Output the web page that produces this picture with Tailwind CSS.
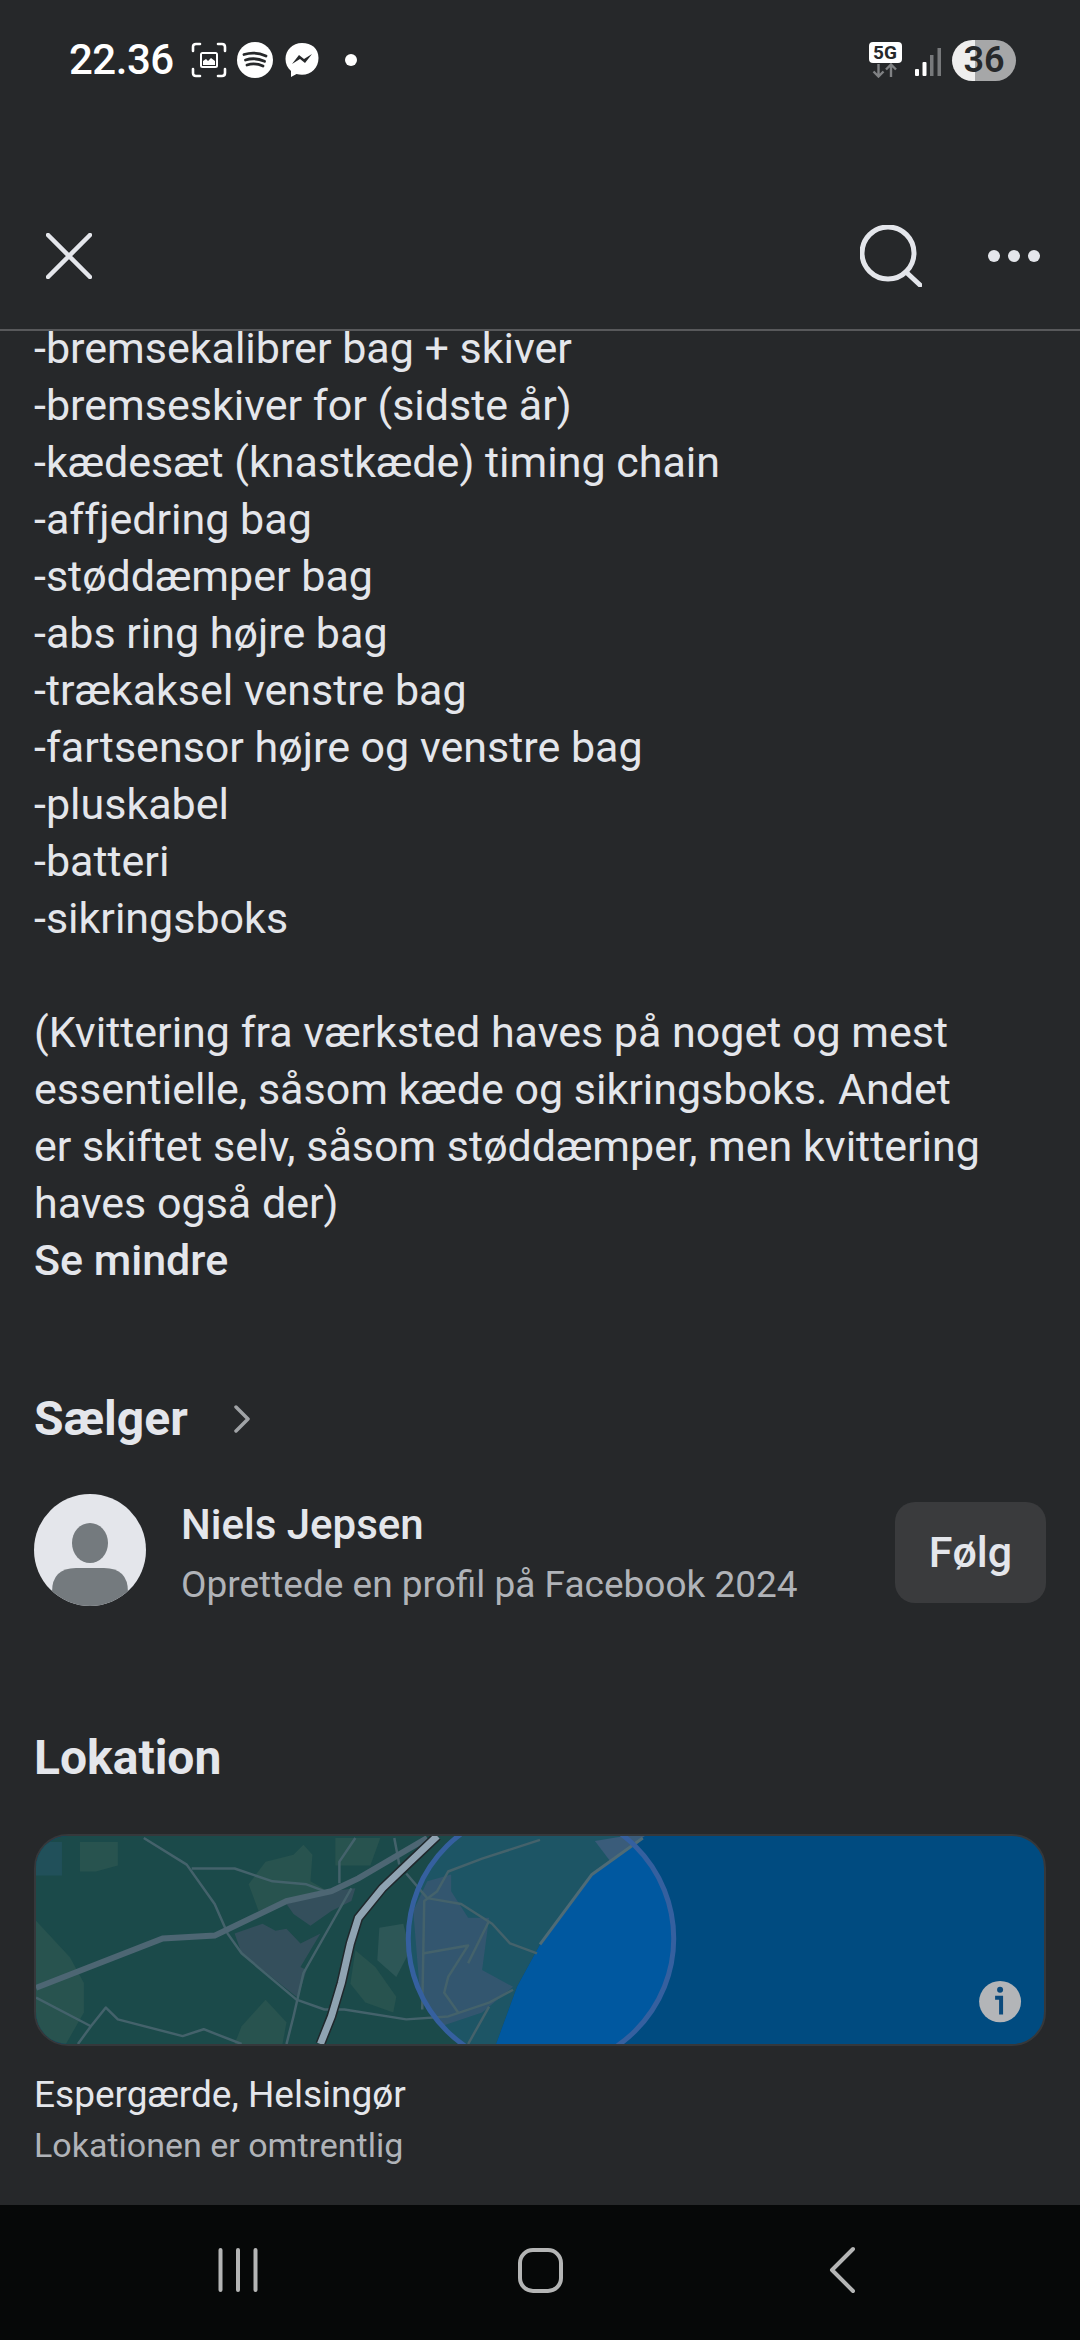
<!DOCTYPE html>
<html><head><meta charset="utf-8">
<script src="https://cdn.jsdelivr.net/npm/@tailwindcss/browser@4"></script>
</head>
<body class="bg-[#26282a]">
<div class="w-[1080px] h-[2340px] flex flex-col overflow-hidden bg-[#26282a] text-[#e4e6eb] font-[Roboto,sans-serif]">
  <!-- status bar -->
  <div class="h-[120px] shrink-0 flex items-center justify-between pl-[69px] pr-[64px] text-white">
    <div class="flex items-center">
      <span class="text-[42px] leading-none font-medium tracking-[-0.5px] w-[122px]">22.36</span>
      <svg class="w-[36px] h-[36px]" viewBox="0 0 36 36" fill="none" stroke="#fff" stroke-width="2.6" stroke-linecap="round"><path d="M2 9V5q0-3 3-3h4M27 2h4q3 0 3 3v4M34 27v4q0 3-3 3h-4M9 34H5q-3 0-3-3v-4"/><rect x="9" y="10" width="18" height="16" rx="2.5" fill="#fff" stroke="none"/><rect x="11" y="12" width="14" height="12" fill="#26282a" stroke="none"/><path d="M12 23v-4l3-2 2 2 3-3 4 3v4z" fill="#fff" stroke="none"/></svg>
      <svg class="w-[36px] h-[36px] ml-[10px]" viewBox="0 0 36 36"><circle cx="18" cy="18" r="18" fill="#fff"/><path d="M7 12.5q11-3.5 22 1.5M8.500 18q9.500-3 19 1.300M10 23q8-2.500 16 1" fill="none" stroke="#26282a" stroke-width="2.800" stroke-linecap="round"/></svg>
      <svg class="w-[34px] h-[36px] ml-[12px]" viewBox="0 0 34 36"><path d="M17 1C7.500 1 .5 8 .5 17c0 5 2 9 5.500 12v6l5.500-3c1.800.500 3.500.700 5.500.700 9.500 0 16.500-7 16.500-16.700S26.500 1 17 1z" fill="#fff"/><path d="M7 22l7-9 5 4 8-5-7 9-5-4z" fill="#26282a"/></svg>
      <span class="w-[12px] h-[12px] rounded-full bg-white ml-[26px]"></span>
    </div>
    <div class="flex items-center">
      <div class="flex flex-col items-center w-[32px] mt-[-1px]">
        <span class="w-[33px] h-[21px] rounded-[4px] bg-white text-[#26282a] text-[19px] leading-[21px] font-bold text-center">5G</span>
        <svg class="w-[26px] h-[15px]" viewBox="0 0 26 15" fill="none" stroke="#808284" stroke-width="2.400"><path d="M6.500 1v12M1.500 8.500l5 5 5-5M19 14V2M14 6.500l5-5 5 5"/></svg>
      </div>
      <svg class="w-[28px] h-[30px] ml-[13px] mt-[3px]" viewBox="0 0 28 30"><rect x="1" y="22" width="4" height="7" rx="1" fill="#fff"/><rect x="8.500" y="15" width="4" height="14" rx="1" fill="#fff"/><rect x="16" y="8" width="3.500" height="21" fill="#77797b"/><rect x="23.500" y="1" width="3.500" height="28" fill="#77797b"/></svg>
      <div class="w-[64px] h-[41px] ml-[10px] rounded-full overflow-hidden flex items-center justify-center bg-[linear-gradient(90deg,#eeeeee_0_36%,#a6a7a8_36%_100%)] text-[#26282a] text-[36px] font-semibold leading-none">36</div>
    </div>
  </div>
  <!-- header -->
  <div class="h-[211px] shrink-0 pt-[62px] flex items-center justify-between pl-[46px] pr-[40px] border-b-2 border-[#58595b]">
    <svg class="w-[46px] h-[46px]" viewBox="0 0 46 46" stroke="#e4e6eb" stroke-width="4.500" stroke-linecap="round"><path d="M2 2l42 42M44 2L2 44"/></svg>
    <div class="flex items-center gap-[66px]">
      <svg class="w-[62px] h-[62px]" viewBox="0 0 62 62" fill="none" stroke="#e4e6eb" stroke-width="5" stroke-linecap="round"><circle cx="28" cy="28" r="26"/><path d="M46 47l14 13"/></svg>
      <svg class="w-[52px] h-[12px]" viewBox="0 0 52 12" fill="#e4e6eb"><circle cx="6" cy="6" r="6"/><circle cx="26" cy="6" r="6"/><circle cx="46" cy="6" r="6"/></svg>
    </div>
  </div>
  <!-- description -->
  <div class="h-[1058px] shrink-0 overflow-hidden px-[34px] text-[43px] leading-[57px]">
    <div class="mt-[-11px]">
      <p>-bremsekalibrer bag + skiver</p>
      <p>-bremseskiver for (sidste år)</p>
      <p>-kædesæt (knastkæde) timing chain</p>
      <p>-affjedring bag</p>
      <p>-støddæmper bag</p>
      <p>-abs ring højre bag</p>
      <p>-trækaksel venstre bag</p>
      <p>-fartsensor højre og venstre bag</p>
      <p>-pluskabel</p>
      <p>-batteri</p>
      <p>-sikringsboks</p>
      <p class="h-[57px]"></p>
      <p>(Kvittering fra værksted haves på noget og mest</p>
      <p>essentielle, såsom kæde og sikringsboks. Andet</p>
      <p>er skiftet selv, såsom støddæmper, men kvittering</p>
      <p>haves også der)</p>
      <p class="font-medium">Se mindre</p>
    </div>
  </div>
  <!-- seller -->
  <div class="flex items-center pl-[34px] h-[60px] shrink-0">
    <h2 class="text-[48px] leading-[60px] font-bold">Sælger</h2>
    <svg class="w-[16px] h-[28px] ml-[46px]" viewBox="0 0 16 28" fill="none" stroke="#a0a3a6" stroke-width="3.500" stroke-linecap="round" stroke-linejoin="round"><path d="M2 2l12 12L2 26"/></svg>
  </div>
  <div class="flex items-center justify-between pl-[34px] pr-[34px] mt-[45px] h-[112px] shrink-0">
    <div class="flex items-center">
      <svg class="w-[112px] h-[112px]" viewBox="0 0 112 112"><defs><clipPath id="av"><circle cx="56" cy="56" r="56"/></clipPath></defs><circle cx="56" cy="56" r="56" fill="#e4e6eb"/><g clip-path="url(#av)" fill="#747a7e"><ellipse cx="56" cy="49" rx="18" ry="20"/><path d="M18 112V98q0-24 24-24h28q24 0 24 24v14z"/></g></svg>
      <div class="ml-[35px] mt-[7px] flex flex-col">
        <span class="text-[42px] leading-[50px] font-medium">Niels Jepsen</span>
        <span class="text-[37px] leading-[46px] mt-[12px] text-[#b0b3b8]">Oprettede en profil på Facebook 2024</span>
      </div>
    </div>
    <button class="w-[151px] h-[101px] mt-[4px] rounded-[20px] bg-[#3a3b3d] text-[43px] font-medium text-[#e4e6eb]">Følg</button>
  </div>
  <!-- location -->
  <h2 class="text-[48px] leading-[60px] font-bold pl-[34px] mt-[122px] shrink-0">Lokation</h2>
  <div class="mx-[34px] mt-[46px] h-[212px] shrink-0 rounded-[34px] border-2 border-[#35383b] overflow-hidden bg-[#004b80] relative">
    <svg class="w-full h-full block" viewBox="0 0 1010 211" preserveAspectRatio="none" fill="none">
      <defs><clipPath id="seaCircle"><circle cx="506" cy="104" r="133"/></clipPath></defs>
      <path d="M0 0H608L557 39 505 110 482 153 461 211H0z" fill="#1b4a4a"/>
      <g fill="#28534f">
        <path d="M44 6H82V30L60 36H44z"/>
        <path d="M0 6H26V40H0z" fill="#21505a"/>
        <path d="M0 86L34 123 48 149 48 179 30 211H0z"/>
        <path d="M213 49L230 26 258 19 268 9 277 19 275 46 289 54 251 66 223 76z"/>
        <path d="M320 116L340 133 361 163 358 179 330 169 315 150z"/>
        <path d="M344 93L368 89 375 116 361 143 342 126z" fill="#2d5757"/>
        <path d="M199 211L206 193 230 166 251 189 247 211z"/>
        <path d="M300 2H345L335 30 300 30z"/>
      </g>
      <path d="M199 99L227 89 240 96 251 94 265 109 285 99 265 133 271 136 265 156 261 163 206 119z" fill="#344f5c"/>
      <path d="M251 69L296 56 320 53 316 66 296 76 275 91 258 79z" fill="#344f5c"/>
      <g clip-path="url(#seaCircle)">
        <path d="M370 0H608L557 39 505 110 482 153 461 211H370z" fill="#1d5565"/>
        <path d="M608 0H650V211H461L482 153 505 110 557 39z" fill="#0058a0"/>
      </g>
      <path d="M378 76L392 46 416 39 416 56 433 83 454 83 447 136 478 153 447 179 406 193 385 163z" fill="#33566f"/>
      <path d="M560 5L590 0H610L575 25z" fill="#3a5c7a"/>
      <g stroke="#44626b" stroke-width="2.500" stroke-linejoin="round">
        <path d="M108 2L151 29 179 69 192 99 206 119 261 166 289 176 309 176 371 186 413 183 454 169 478 156"/>
        <path d="M156 33H199L237 46 271 49 289 56"/>
        <path d="M320 2L304 26V48M316 53L268 139 258 183 251 211"/>
        <path d="M0 164L55 193 70 174 82 186 147 203 168 196 206 211M55 193L42 211M359 2L364 29"/>
        <path d="M371 38L392 63 426 69 457 89 475 109 502 119"/>
        <path d="M505 4L447 23 413 36 402 56 389 66 387 176M389 119L433 111 413 143 409 159 423 179M454 86L433 129M454 173L433 211"/>
        <path d="M505 110L557 39 608 2" stroke="#4e6b76" stroke-width="3"/>
      </g>
      <path d="M0 154L127 104 179 101 251 66 296 56 323 43 392 2" stroke="#4d6673" stroke-width="6"/>
      <path d="M402 0L375 26 347 53 323 83 315 109 306 149 296 183 285 211" stroke="#20282c" stroke-width="10"/>
      <path d="M402 0L375 26 347 53 323 83 315 109 306 149 296 183 285 211" stroke="#8fa3b2" stroke-width="7"/>
      <circle cx="506" cy="104" r="133" stroke="#35609f" stroke-width="5"/>
      <circle cx="966" cy="168" r="21" fill="#b3b5b8"/>
      <circle cx="966" cy="156" r="3" fill="#0b4a7c"/>
      <path d="M961 164h6v17" stroke="#0b4a7c" stroke-width="4"/>
    </svg>
  </div>
  <div class="pl-[34px] mt-[24px] shrink-0 flex flex-col">
    <span class="text-[37px] leading-[50px]">Espergærde, Helsingør</span>
    <span class="text-[34px] leading-[50px] text-[#b0b3b8]">Lokationen er omtrentlig</span>
  </div>
  <div class="flex-1"></div>
  <!-- nav bar -->
  <div class="h-[135px] shrink-0 bg-[#060808] flex items-center relative">
    <svg class="w-[1080px] h-[135px]" viewBox="0 2205 1080 135" fill="none" stroke="#b4b5b5" stroke-width="4" stroke-linecap="round" stroke-linejoin="round"><path d="M220.500 2250v40M238 2250v40M255.500 2250v40M853 2249l-21 21 21 21" /><rect x="520" y="2250" width="41" height="41" rx="13"/></svg>
  </div>
</div>
</body></html>
